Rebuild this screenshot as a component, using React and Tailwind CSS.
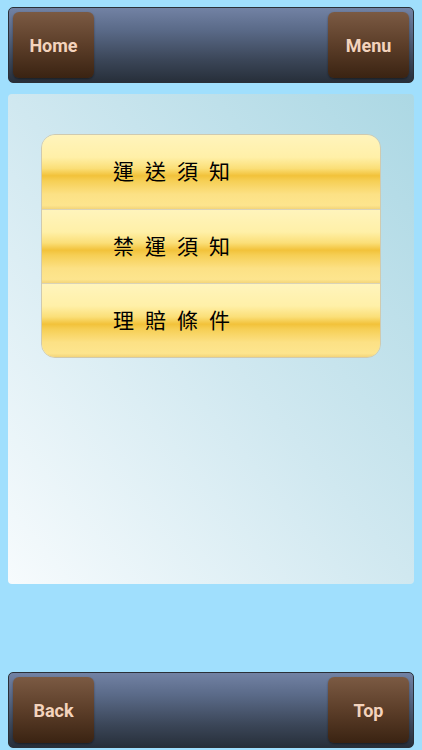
import React from "react";

const NavButton = ({ label }) => (
  <button className="w-[81px] h-[66px] rounded-[6px] bg-[linear-gradient(to_bottom,#7b5a43_0%,#5c3e29_50%,#3a2312_100%)] text-[#f3d3bd] text-[18px] font-bold font-['Roboto',sans-serif] shadow-[0_1px_2px_rgba(0,0,0,0.4)]">
    {label}
  </button>
);

const Bar = ({ left, right }) => (
  <div className="mx-[8px] h-[76px] rounded-[5px] border border-[#2a3038] bg-[linear-gradient(to_bottom,#7282a4_0%,#5a6a88_30%,#3b4658_70%,#272f3a_100%)] flex items-center justify-between px-[4px]">
    <NavButton label={left} />
    <NavButton label={right} />
  </div>
);

const items = ["運送須知", "禁運須知", "理賠條件"];

export default function App() {
  return (
    <div className="w-[422px] h-[750px] bg-[#a0dffd] flex flex-col overflow-hidden">
      <div className="pt-[7px]">
        <Bar left="Home" right="Menu" />
      </div>

      <div className="mx-[8px] mt-[11px] h-[490px] rounded-[4px] bg-[linear-gradient(to_bottom_left,#acd8e4_0%,#d0e8f0_50%,#f7fbfd_100%)] pt-[40px] px-[33px]">
        <div className="rounded-[14px] border border-[#cfcab0] overflow-hidden">
          {items.map((t, i) => (
            <div
              key={t}
              className={`h-[74px] flex items-center pl-[71px] bg-[linear-gradient(to_bottom,#fff4bc_0%,#fff0a8_30%,#fbdf78_45%,#f2c23a_55%,#f6cf55_62%,#fce185_80%,#fde58e_95%,#f3d47a_100%)] ${
                i > 0 ? "border-t border-[#d9d3b8]" : ""
              }`}
            >
              <span className="text-[21px] tracking-[11px] text-black font-['Noto_Sans_CJK_TC',sans-serif] -mt-[2px]">
                {t}
              </span>
            </div>
          ))}
        </div>
      </div>

      <div className="mt-auto pb-[2px]">
        <Bar left="Back" right="Top" />
      </div>
    </div>
  );
}
